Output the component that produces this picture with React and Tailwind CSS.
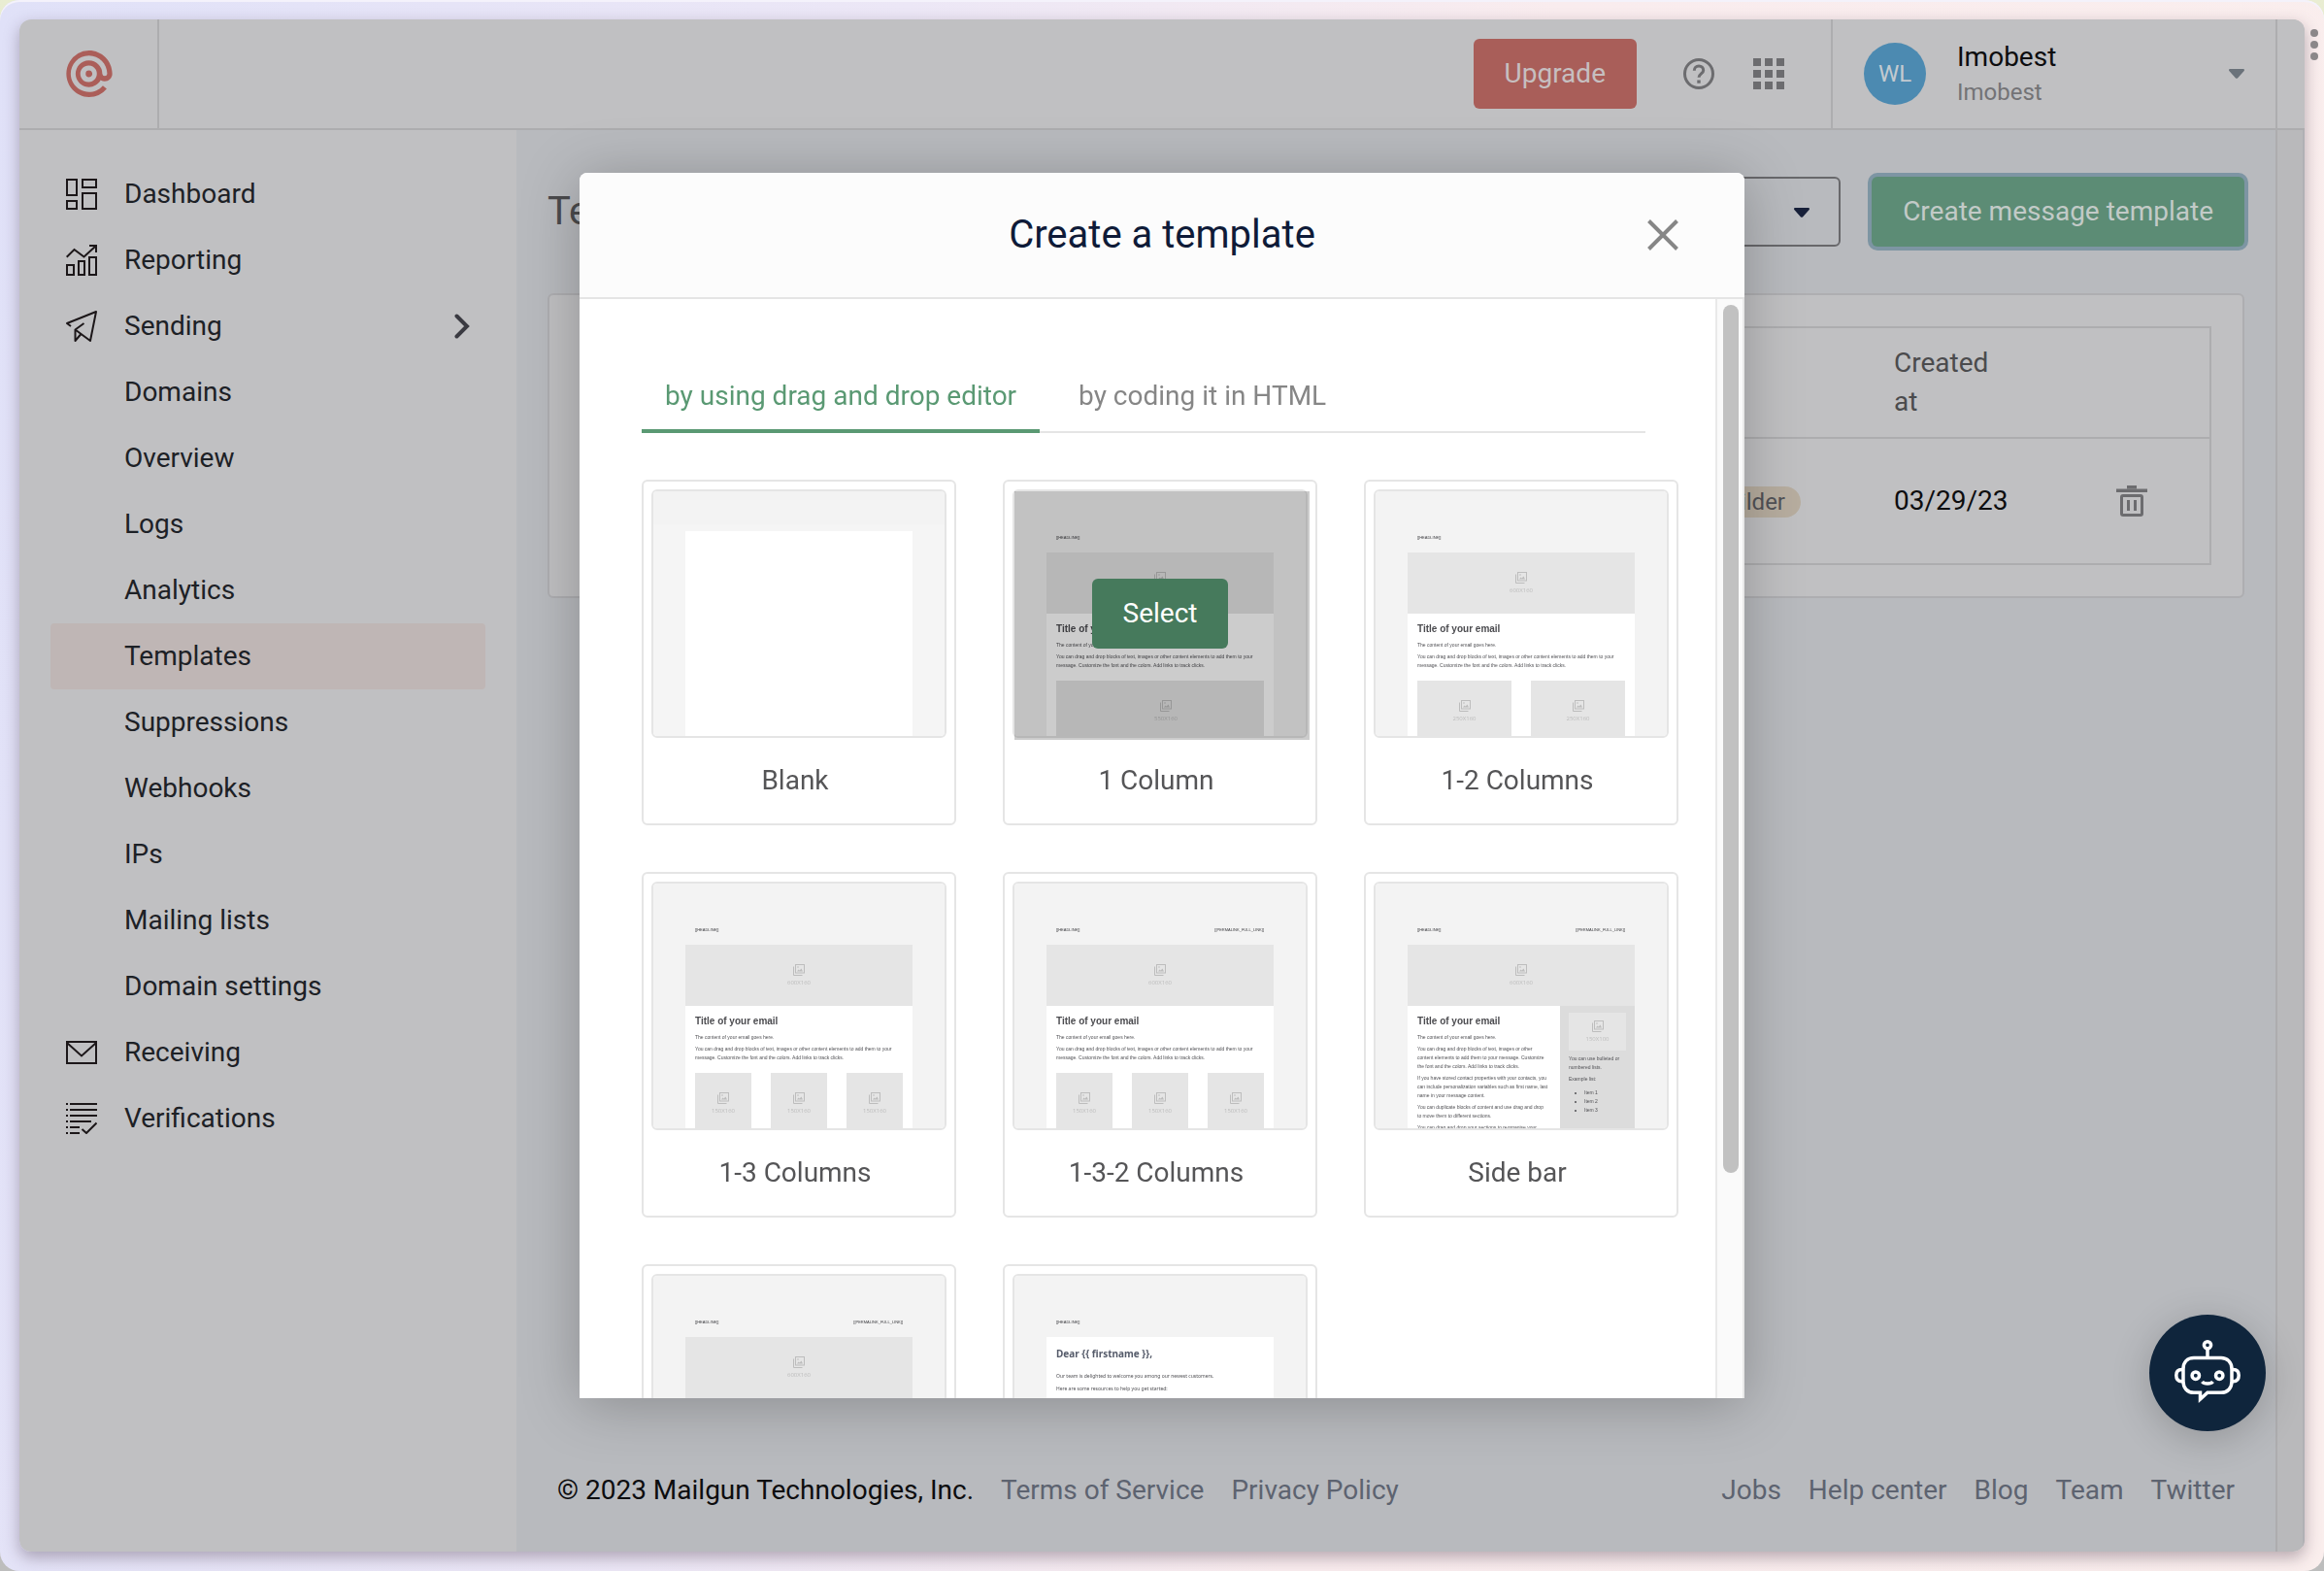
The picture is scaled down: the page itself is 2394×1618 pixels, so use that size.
import React from "react";
import { SiMailgun } from "react-icons/si";

const stroke = { fill: "none", stroke: "#1c1719", strokeWidth: 2 };

const navIcons = {
  dashboard: (
    <svg viewBox="0 0 32 32" className="size-8" {...stroke}>
      <rect x="1" y="1" width="10" height="16" />
      <rect x="1" y="23" width="10" height="8" />
      <rect x="17" y="1" width="14" height="8" />
      <rect x="17" y="15" width="14" height="16" />
    </svg>
  ),
  reporting: (
    <svg viewBox="0 0 32 32" className="size-8" {...stroke}>
      <rect x="1" y="21" width="7" height="10" />
      <rect x="13" y="17" width="6" height="14" />
      <rect x="24" y="13" width="7" height="18" />
      <path d="M.7 12.7 8.5 5l10 7.5L30.5 1.5M24 1h7v7" />
    </svg>
  ),
  sending: (
    <svg viewBox="0 0 32 32" className="size-8" strokeLinejoin="round" {...stroke}>
      <path d="M5 16 1 13 31 1l-6 30L9.500 19.500 18.500 13M9.500 19.500v11.500l5.500-6.500" />
    </svg>
  ),
  receiving: (
    <svg viewBox="0 0 32 32" className="size-8" {...stroke}>
      <rect x="1" y="5" width="30" height="22" />
      <path d="m1 6 15 13.500L31 6" />
    </svg>
  ),
  verifications: (
    <svg viewBox="0 0 32 32" className="size-8" {...stroke}>
      <path d="M0 1h2M0 7h2M0 13h2M0 19h2M0 25h2M0 31h2M4 1h28M4 7h28M4 13h28M4 19h22M4 25h10M4 31h10" />
      <path d="m16.500 27 4.500 4 10.500-10.500" />
    </svg>
  ),
};

const navItems = [
  { label: "Dashboard", icon: "dashboard" },
  { label: "Reporting", icon: "reporting" },
  { label: "Sending", icon: "sending", open: true },
  { label: "Domains" },
  { label: "Overview" },
  { label: "Logs" },
  { label: "Analytics" },
  { label: "Templates", active: true },
  { label: "Suppressions" },
  { label: "Webhooks" },
  { label: "IPs" },
  { label: "Mailing lists" },
  { label: "Domain settings" },
  { label: "Receiving", icon: "receiving" },
  { label: "Verifications", icon: "verifications" },
];

function Caret({ className }) {
  return (
    <svg viewBox="0 0 16 10" className={`h-[10px] w-4 ${className}`} fill="currentColor">
      <path d="M1.200 0h13.600c1 0 1.500 1.100.9 1.900L9 9.400c-.5.600-1.500.600-2 0L.3 1.900C-.3 1.100.2 0 1.200 0z" />
    </svg>
  );
}

function Header() {
  return (
    <header className="flex h-[114px] items-stretch border-b-2 border-[#adadaf] bg-[#c0c0c2]">
      <a href="#home" aria-label="Mailgun" className="flex w-36 items-center border-r-2 border-[#adadaf] pl-12">
        <SiMailgun className="size-12 text-[#ab5e59]" />
      </a>
      <div className="flex flex-1 items-center justify-end pr-12">
        <button className="h-[72px] rounded-md bg-[#a95e59] px-8 text-[#c6bfc0]">Upgrade</button>
        <button aria-label="Help" className="ml-12">
          <svg viewBox="0 0 32 32" className="size-8" fill="none" stroke="#6c6c6f" strokeWidth="3">
            <circle cx="16" cy="16" r="14.500" />
            <path d="M11.300 12.800c0-2.800 2-4.800 4.700-4.800s4.700 1.800 4.700 4.400c0 3.400-4.700 3.700-4.700 7.400" />
            <path d="M16 22.400v3.400" strokeWidth="3.400" />
          </svg>
        </button>
        <button aria-label="Applications" className="ml-10">
          <svg viewBox="0 0 32 32" className="size-8" fill="#6c6c6f">
            {[0, 12, 24].map((y) =>
              [0, 12, 24].map((x) => <rect key={`${x}-${y}`} x={x} y={y} width="8" height="8" />)
            )}
          </svg>
        </button>
      </div>
      <button className="flex w-[458px] items-center border-l-2 border-[#adadaf] px-8 text-left">
        <span className="flex size-16 items-center justify-center rounded-full bg-[#4c8ab1] text-[24px] text-[#c3cad0]">WL</span>
        <span className="ml-8 flex flex-1 flex-col pt-[2px]">
          <span className="leading-9 text-[#0d0d0f]">Imobest</span>
          <span className="text-[24px] leading-9 text-[#737376]">Imobest</span>
        </span>
        <Caret className="text-[#6a727a]" />
      </button>
    </header>
  );
}

function Sidebar() {
  return (
    <nav className="w-[512px] shrink-0 bg-[#c0c0c2] px-8 pt-8">
      <ul>
        {navItems.map((item) => (
          <li key={item.label}>
            <a
              href={`#${item.label}`}
              className={
                item.active
                  ? "flex h-[68px] w-[448px] items-center rounded bg-[#bfb6b5] px-4 text-[#1d2126]"
                  : "flex h-[68px] w-[448px] items-center rounded px-4 text-[#1d2126]"
              }
            >
              <span className="mr-7 size-8">{item.icon && navIcons[item.icon]}</span>
              <span className="flex-1">{item.label}</span>
              {item.open && (
                <svg viewBox="0 0 16 26" className="h-[26px] w-4" fill="none" stroke="#3a3a41" strokeWidth="4" strokeLinecap="round">
                  <path d="m2.500 2.500 10.500 10.500L2.500 23.500" />
                </svg>
              )}
            </a>
          </li>
        ))}
      </ul>
    </nav>
  );
}

function TemplatesPage() {
  return (
    <main className="flex flex-1 flex-col bg-[#b8babe] px-8 pt-12">
      <div className="flex items-center">
        <h1 className="flex-1 text-[40px] leading-[48px] text-[#4b4b4d]">Templates</h1>
        <div className="relative mr-8">
          <select aria-label="Domain" className="h-[72px] w-[420px] appearance-none rounded-md border-2 border-[#68686b] pl-8">
            <option></option>
          </select>
          <Caret className="pointer-events-none absolute top-8 right-8 text-[#18213a]" />
        </div>
        <button className="h-[72px] rounded-md bg-[#5c8c75] px-8 text-[#c2cac7] shadow-[0_0_0_4px_#7d95a3]">
          Create message template
        </button>
      </div>
      <section className="mt-12 rounded-md border-2 border-[#aeaeb1] bg-[#c0c0c2] p-8">
        <table className="w-full border-collapse text-left">
          <thead>
            <tr className="h-[114px] border-2 border-[#adadaf] leading-10 text-[#4b4b4d]">
              <th className="px-8 font-normal">Template name</th>
              <th className="w-[240px] px-8 font-normal">Type</th>
              <th className="w-[229px] px-8 font-normal">
                Created
                <br />
                at
              </th>
              <th className="w-[129px]" aria-label="Actions"></th>
            </tr>
          </thead>
          <tbody>
            <tr className="h-[130px] border-2 border-[#adadaf]">
              <td className="px-8">Template</td>
              <td className="pr-16 text-right">
                <span className="inline-block rounded-full bg-[#b7ad9f] px-4 text-[24px] leading-8 text-[#525257]">Builder</span>
              </td>
              <td className="px-8 text-[#0d0d0f]">03/29/23</td>
              <td className="pl-8">
                <button aria-label="Delete template" className="block">
                  <svg viewBox="0 0 32 32" className="size-8" fill="none" stroke="#6c6c6f" strokeWidth="3">
                    <path d="M0 5.200h32M11 1.500h10" strokeWidth="3.500" />
                    <rect x="5.500" y="10.500" width="21" height="20" rx="1.500" />
                    <path d="M12.500 15v11M19.500 15v11" />
                  </svg>
                </button>
              </td>
            </tr>
          </tbody>
        </table>
      </section>
      <footer className="mt-auto flex justify-between px-[10px] pb-[43px] leading-10 text-[#5d6370]">
        <div className="flex gap-7">
          <span className="text-[#0d0d0f]">© 2023 Mailgun Technologies, Inc.</span>
          <a href="#terms">Terms of Service</a>
          <a href="#privacy">Privacy Policy</a>
        </div>
        <div className="flex gap-7">
          {["Jobs", "Help center", "Blog", "Team", "Twitter"].map((t) => (
            <a key={t} href={`#${t}`}>{t}</a>
          ))}
        </div>
      </footer>
    </main>
  );
}

function Placeholder({ size, className = "h-[63px] bg-[#e5e5e5]" }) {
  return (
    <div className={`flex flex-col items-center justify-center text-[#bdbdbd] ${className}`}>
      <svg viewBox="0 0 12 12" className="size-3" fill="none" stroke="currentColor" strokeWidth="1">
        <rect x="2.500" y=".5" width="9" height="8.500" />
        <path d="M.5 2.500v9h9" />
        <path d="M4 7.500l1.500-2 1.200 1L8.500 4.500 10 7.500z" fill="currentColor" stroke="none" />
        <circle cx="5" cy="3" r=".8" fill="currentColor" stroke="none" />
      </svg>
      <span className="mt-[3px] font-['Open_Sans',sans-serif] text-[6px] leading-[9px]">{size}</span>
    </div>
  );
}

function EmailHead({ permalink }) {
  return (
    <div className="flex h-[63px] items-end justify-between px-[10px] pb-[11px] text-[4px] leading-[9px] text-[#3c3c40]">
      <span>[[HEADLINE]]</span>
      {permalink && <span>[[PERMALINK_FULL_LINK]]</span>}
    </div>
  );
}

const copyStyle = "flex flex-col gap-[3px] text-[5px] leading-[9px] text-[#505054]";

function Intro() {
  return (
    <>
      <h3 className="mb-1 text-[10px] leading-4 font-bold text-[#4c4c50]">Title of your email</h3>
      <div className={copyStyle}>
        <p>The content of your email goes here.</p>
        <p>
          You can drag and drop blocks of text, images or other content elements to add them to your
          message. Customize the font and the colors. Add links to track clicks.
        </p>
      </div>
    </>
  );
}

function ColumnsEmail({ sizes, permalink, gridClass }) {
  return (
    <>
      <EmailHead permalink={permalink} />
      <Placeholder size="600X160" />
      <div className="h-full bg-white px-[10px] pt-2">
        <Intro />
        <div className={`mt-[11px] grid gap-5 ${gridClass}`}>
          {sizes.map((s, i) => (
            <Placeholder
              key={i}
              size={s}
              className={s === "550X160" ? "h-[63px] bg-[#e5e5e5] pl-3" : "h-[63px] bg-[#e5e5e5]"}
            />
          ))}
        </div>
      </div>
    </>
  );
}

function SidebarEmail() {
  return (
    <>
      <EmailHead permalink />
      <Placeholder size="600X160" />
      <div className="flex h-full">
        <div className="flex-1 bg-white pt-2 pr-3 pl-[10px]">
          <h3 className="mb-1 text-[10px] leading-4 font-bold text-[#4c4c50]">Title of your email</h3>
          <div className={copyStyle}>
            <p>The content of your email goes here.</p>
            <p>You can drag and drop blocks of text, images or other content elements to add them to your message. Customize the font and the colors. Add links to track clicks.</p>
            <p>If you have stored contact properties with your contacts, you can include personalization variables such as first name, last name in your message content.</p>
            <p>You can duplicate blocks of content and use drag and drop to move them to different sections.</p>
            <p>You can drag and drop your sections to reorganise your message.</p>
          </div>
        </div>
        <div className="w-[77px] bg-[#dcdcdc] px-[9px] pt-[7px]">
          <Placeholder size="150X100" className="mb-1 h-[39px] bg-[#e5e5e5]" />
          <div className={copyStyle}>
            <p>You can use bulleted or numbered lists.</p>
            <p>Example list:</p>
            <ul className="list-disc pt-[2px] pl-4">
              <li>Item 1</li>
              <li>Item 2</li>
              <li>Item 3</li>
            </ul>
          </div>
        </div>
      </div>
    </>
  );
}

function WelcomeEmail() {
  return (
    <>
      <EmailHead />
      <div className="h-full bg-white px-[10px] pt-2 font-['Noto_Sans',sans-serif]">
        <h3 className="mb-[10px] text-[10px] leading-[18px] font-bold text-[#555b6a]">{"Dear {{ firstname }},"}</h3>
        <div className="flex flex-col gap-1 text-[5px] leading-[9px] text-[#505054]">
          <p>Our team is delighted to welcome you among our newest customers.</p>
          <p>Here are some resources to help you get started:</p>
        </div>
      </div>
    </>
  );
}

function TemplateCard({ label, selected, blank, children }) {
  return (
    <article className="rounded-md border-2 border-[#e5e5e5] bg-white p-2 pb-0">
      <div className="relative rounded-md border-2 border-[#e5e5e5]">
        {blank ? (
          <div className="h-[252px] overflow-hidden rounded bg-[#f5f5f5]">
            <div className="h-[34px] bg-[#f3f3f3]"></div>
            <div className="mx-auto mt-[7px] h-full w-[234px] bg-white"></div>
          </div>
        ) : (
          <div className="h-[252px] overflow-hidden rounded bg-[#f3f3f3] font-['Liberation_Sans',sans-serif]">
            <div className="mx-auto h-full w-[234px]">{children}</div>
          </div>
        )}
        {selected && (
          <div className="absolute top-0 -right-1 -bottom-1 left-0 flex items-center justify-center bg-black/20 pr-1 pb-1">
            <button className="h-[72px] rounded-md bg-[#467a5c] px-8 text-white">Select</button>
          </div>
        )}
      </div>
      <h2 className="pr-2 text-center leading-[88px] text-[#555557]">{label}</h2>
    </article>
  );
}

function CreateTemplateDialog() {
  return (
    <div className="fixed inset-0 flex justify-center py-[178px]">
      <div
        role="dialog"
        aria-labelledby="dialog-title"
        className="flex h-full w-[1200px] max-w-full flex-col overflow-hidden rounded-t-lg bg-white shadow-[0_6px_60px_rgba(0,0,0,0.25)]"
      >
        <div className="grid h-[130px] shrink-0 grid-cols-[1fr_auto_1fr] items-center border-b-2 border-[#e5e5e5] bg-[#fcfcfc]">
          <h2 id="dialog-title" className="col-start-2 text-[40px] leading-[48px] text-[#0f1b38]">
            Create a template
          </h2>
          <button aria-label="Close" className="mr-[68px] justify-self-end">
            <svg viewBox="0 0 32 32" className="size-8" stroke="#868686" strokeWidth="4">
              <path d="M1.500 1.500l29 29M30.500 1.500l-29 29" />
            </svg>
          </button>
        </div>
        <div className="flex min-h-0 flex-1">
          <div className="flex-1 overflow-hidden pr-[38px] pl-16">
            <div role="tablist" className="mt-[62px] mr-[34px] flex gap-4 shadow-[inset_0_-2px_0_#e5e5e5]">
              <button role="tab" aria-selected="true" className="h-[76px] border-b-4 border-[#5a9973] px-6 pt-1 text-[#5a9973]">
                by using drag and drop editor
              </button>
              <button role="tab" aria-selected="false" className="h-[76px] px-6 text-[#868686]">
                by coding it in HTML
              </button>
            </div>
            <div className="mt-12 grid grid-cols-3 gap-12">
              <TemplateCard label="Blank" blank />
              <TemplateCard label="1 Column" selected>
                <ColumnsEmail sizes={["550X160"]} gridClass="grid-cols-1" />
              </TemplateCard>
              <TemplateCard label="1-2 Columns">
                <ColumnsEmail sizes={["250X160", "250X160"]} gridClass="grid-cols-2" />
              </TemplateCard>
              <TemplateCard label="1-3 Columns">
                <ColumnsEmail sizes={["150X160", "150X160", "150X160"]} gridClass="grid-cols-3" />
              </TemplateCard>
              <TemplateCard label="1-3-2 Columns">
                <ColumnsEmail permalink sizes={["150X160", "150X160", "150X160"]} gridClass="grid-cols-3" />
              </TemplateCard>
              <TemplateCard label="Side bar">
                <SidebarEmail />
              </TemplateCard>
              <TemplateCard label="Newsletter">
                <ColumnsEmail permalink sizes={["250X160", "250X160"]} gridClass="grid-cols-2" />
              </TemplateCard>
              <TemplateCard label="Welcome">
                <WelcomeEmail />
              </TemplateCard>
            </div>
          </div>
          <div className="w-[30px] border-x-2 border-[#e9e9e9] bg-[#fafafa] px-[6px] pt-[6px]">
            <div className="h-[calc(80%-7px)] w-4 rounded-full bg-[#c1c1c1]"></div>
          </div>
        </div>
      </div>
    </div>
  );
}

function ChatButton() {
  return (
    <button
      aria-label="Open chat assistant"
      className="fixed right-[60px] bottom-36 size-[120px] rounded-full bg-[#0f253c] shadow-[0_8px_40px_rgba(0,0,0,0.2)]"
    >
      <svg viewBox="0 0 120 120" fill="none" stroke="#fff" strokeWidth="3.500">
        <circle cx="60" cy="31.300" r="3.600" />
        <path d="M60 35.500v8" />
        <path d="M46 80.300h6.500v6.700l7.500-6.700h14c7 0 11-5 11-11.500V56c0-7-4.500-11.500-11-11.500H46C39 44.500 35 49 35 56v12.800c0 6.500 4 11.500 11 11.500z" />
        <path d="M35 56.500h-1.500c-4 0-5.700 2-5.700 6s1.700 6.200 5.700 6.200H35M85 56.500h1.500c4 0 5.700 2 5.700 6s-1.700 6.200-5.700 6.200H85" />
        <circle cx="47.800" cy="62.700" r="3.700" />
        <circle cx="72.200" cy="62.700" r="3.700" />
        <path d="M54.500 69c2 2.700 9 2.700 11 0" />
      </svg>
    </button>
  );
}

export default function App() {
  return (
    <div className="min-h-screen bg-linear-to-b from-[#e9edd2] to-[#bdbdbd] font-[Roboto,sans-serif] text-[28px]">
      <div className="flex min-h-screen rounded-[20px] bg-linear-[100deg,#e0e1f8_0%,#ece7f6_35%,#f9ecee_60%,#faeeed_100%] p-5 shadow-[inset_0_2px_0_#f4f2fb]">
        <div className="flex flex-1 overflow-hidden rounded-xl shadow-[0_6px_16px_rgba(60,40,60,0.35)]">
          <div className="flex flex-1 flex-col">
            <Header />
            <div className="flex flex-1">
              <Sidebar />
              <TemplatesPage />
            </div>
          </div>
          <div className="flex w-[30px] flex-col border-l-2 border-[#adadaf] bg-[#b9b9bb]">
            <div className="h-[114px] border-b-2 border-[#adadaf] bg-[#c0c0c2]"></div>
            <div className="flex-1 border-r-2 border-[#b0b0b4]"></div>
          </div>
        </div>
      </div>
      <button aria-label="More options" className="fixed top-[30px] right-[6px] flex flex-col gap-1">
        <span className="size-2 rounded-full bg-[#8b8789]"></span>
        <span className="size-2 rounded-full bg-[#8b8789]"></span>
        <span className="size-2 rounded-full bg-[#8b8789]"></span>
      </button>
      <CreateTemplateDialog />
      <ChatButton />
    </div>
  );
}
